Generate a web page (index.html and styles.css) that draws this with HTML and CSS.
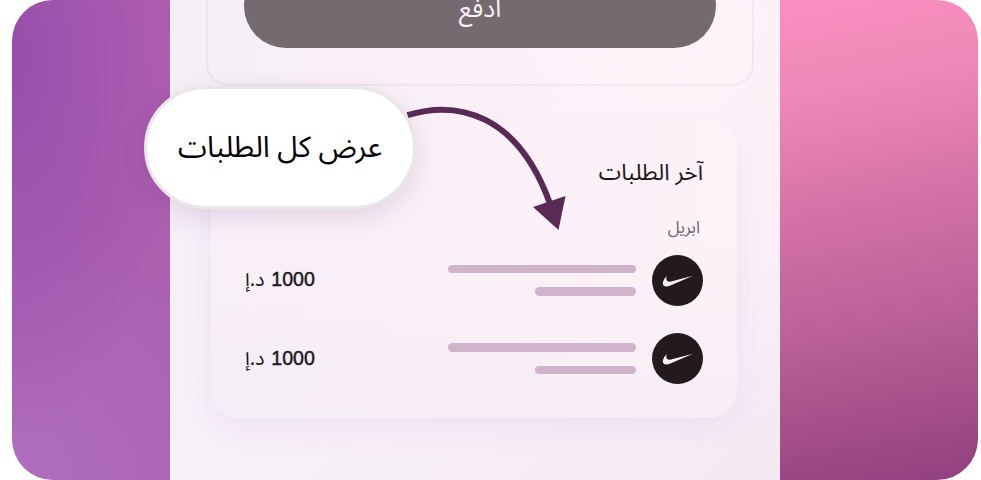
FILE: index.html
```html
<!DOCTYPE html>
<html lang="ar" dir="rtl">
<head>
<meta charset="utf-8">
<title>آخر الطلبات</title>
<link rel="stylesheet" href="styles.css">
</head>
<body>
<main class="stage">
  <section class="panel">
    <div class="pay-box">
      <div class="pay-button"><span class="pay-label">ادفع</span></div>
    </div>
    <div class="orders">
      <h2 class="orders-title">آخر الطلبات</h2>
      <p class="orders-month">ابريل</p>
      <div class="order">
        <div class="avatar"><svg viewBox="0 0 50 50"><path d="M14.4 20.6C11 24.4 9.6 28.2 11.4 30C12.9 31.4 15.4 30.9 18 29.8L40.2 20.3L18.6 25.9C14.8 26.8 13.2 24.7 14.4 20.6Z"/></svg></div>
        <div class="lines"><i class="line long"></i><i class="line short"></i></div>
        <div class="price"><span class="amount">1000</span> <span class="currency">د.إ</span></div>
      </div>
      <div class="order">
        <div class="avatar"><svg viewBox="0 0 50 50"><path d="M14.4 20.6C11 24.4 9.6 28.2 11.4 30C12.9 31.4 15.4 30.9 18 29.8L40.2 20.3L18.6 25.9C14.8 26.8 13.2 24.7 14.4 20.6Z"/></svg></div>
        <div class="lines"><i class="line long"></i><i class="line short"></i></div>
        <div class="price"><span class="amount">1000</span> <span class="currency">د.إ</span></div>
      </div>
    </div>
  </section>
  <svg class="arrow" viewBox="0 0 170 130"><path class="arrow-line" d="M7.5 15.2C57 0 118 13 150.5 105"/><path class="arrow-head" d="M133 107L165.5 96L158.5 130Z"/></svg>
  <div class="callout"><span class="callout-label">عرض كل الطلبات</span></div>
</main>
</body>
</html>
```
FILE: styles.css
```css
* { box-sizing: border-box; }
body {
  margin: 0;
  background: #fff;
  font-family: "Noto Sans", "Noto Sans Arabic", "Open Sans", sans-serif;
}
.stage {
  position: relative;
  width: 966px;
  height: 480px;
  margin-right: 3px;
  padding-right: 198.5px;
  border-radius: 41px;
  overflow: hidden;
  background:
    linear-gradient(169deg, #f98fc0 0%, #ee87b7 20%, #d372a7 43%, #bb6098 66%, #a8508b 82%, #914080 100%) right / 199px 100% no-repeat,
    radial-gradient(ellipse 170px 380px at 0 60px, #974fab 0%, rgba(157, 84, 175, .75) 45%, rgba(168, 93, 176, 0) 100%) left / 170px 100% no-repeat,
    radial-gradient(ellipse 260px 260px at 0 480px, #b06dbe, rgba(170, 99, 180, 0)) left / 300px 100% no-repeat,
    linear-gradient(0deg, #a962b3 0%, #ab61b1 35%, #ad5eae 65%, #b05db0 100%);
}
.panel {
  width: 609.5px;
  height: 480px;
  overflow: hidden;
  background:
    radial-gradient(ellipse 430px 400px at 480px 20px, rgba(255, 244, 250, 1), rgba(253, 240, 247, .7) 50%, rgba(246, 238, 245, 0)),
    linear-gradient(135deg, #f4eff7, #f7f0f7 50%, #f4eaf2);
}
.pay-box {
  width: 548px;
  height: 126px;
  margin: -40px 25.5px 0 0;
  padding: 4px 36px 0;
  border: 2px solid rgba(80, 55, 75, .06);
  border-radius: 22px;
}
.pay-button {
  display: flex;
  justify-content: center;
  width: 472px;
  height: 84px;
  padding-top: 26px;
  margin-top: -2px;
  border-radius: 42px;
  background: #756a70;
  color: #fff3fa;
}
.pay-label { font-size: 25px; line-height: 34px; }
.orders {
  width: 526px;
  height: 298px;
  margin: 34px 42.5px 0 0;
  padding: 33px 34px 0;
  border-radius: 28px;
  background:
    linear-gradient(180deg, rgba(244, 237, 244, 0) 40%, rgba(244, 237, 244, .7) 100%),
    linear-gradient(90deg, #f8f0f7, #fbf0f7 45%, #fdf2f8);
  box-shadow: 0 10px 26px rgba(176, 140, 250, .12);
}
.orders-title { margin: 0; height: 38px; color: #21161e; font-size: 22.6px; font-weight: 400; line-height: 38px; }
.orders-month { margin: 21px 3px 0 0; height: 30px; color: #73676f; font-size: 17px; line-height: 30px; }
.order { display: flex; height: 51px; margin-top: 12.5px; align-items: center; }
.order + .order { margin-top: 27.5px; }
.avatar { width: 51px; height: 51px; border-radius: 50%; background: #24191f; flex: none; }
.avatar svg { display: block; width: 51px; height: 51px; fill: #fcf3f8; }
.lines { display: flex; flex-direction: column; gap: 14px; width: 188px; margin-right: 16.5px; }
.line { height: 8.5px; border-radius: 5px; background: #d1b3cb; }
.long { width: 188px; }
.short { width: 101px; }
.price { margin-right: auto; padding-bottom: 2px; color: #21161e; font-size: 20px; white-space: nowrap; line-height: 28px; }
.amount { font-family: "Liberation Sans", sans-serif; font-size: 19.6px; -webkit-text-stroke: .45px #21161e; }
.currency { margin-right: 1.5px; font-size: 20px; }
.arrow { position: absolute; left: 388px; top: 100px; width: 170px; height: 130px; }
.arrow-line { fill: none; stroke: #5a2a56; stroke-width: 6; }
.arrow-head { fill: #5a2a56; }
.callout {
  position: absolute;
  left: 132px;
  top: 86px;
  width: 272px;
  height: 123px;
  display: flex;
  justify-content: center;
  align-items: center;
  padding-bottom: 4px;
  border: 3px solid #e8e7e8;
  border-radius: 62px;
  background: #fff;
  box-shadow: 0 8px 24px rgba(95, 45, 105, .14);
}
.callout-label { color: #080207; font-size: 29.3px; line-height: 44px; }
```
